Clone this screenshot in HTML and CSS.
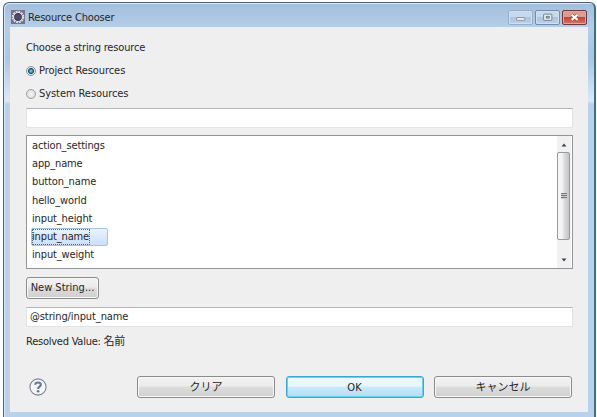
FILE: index.html
```html
<!DOCTYPE html>
<html lang="ja">
<head>
<meta charset="utf-8">
<title>Resource Chooser</title>
<link rel="stylesheet" href="styles.css">
</head>
<body>
<main class="window">
  <header class="titlebar">
    <svg class="app-icon" viewBox="0 0 14 14">
      <rect width="14" height="14" fill="#76718f"/>
      <circle cx="7" cy="7" r="5.2" fill="none" stroke="#e9e6ec" stroke-width="2" stroke-dasharray="1.7 1"/>
      <circle cx="7" cy="7" r="4.5" fill="#413c57" stroke="#e5e3eb"/>
      <path d="M3 6h8M3 8h8" stroke="#77718c" stroke-width=".6"/>
    </svg>
    <h1 class="title">Resource Chooser</h1>
    <div class="controls">
      <span class="control"><svg viewBox="0 0 24 13"><rect x="8" y="6.5" width="8.5" height="3" rx=".5" fill="#eee" stroke="#76818e" stroke-width=".8"/></svg></span>
      <span class="control maximize"><svg viewBox="0 0 24 13"><rect x="8" y="3" width="8.5" height="6.5" rx=".5" fill="#f1f1f1" stroke="#66717e" stroke-width=".9"/><rect x="10.7" y="5.2" width="3.2" height="2" fill="#8cacd0" stroke="#66717e" stroke-width=".8"/></svg></span>
      <span class="control close"><svg viewBox="0 0 24 13"><path d="M9 3.6l6.2 5.4M15.2 3.6l-6.2 5.4" stroke="#70474a" stroke-width="3.4"/><path d="M9 3.6l6.2 5.4M15.2 3.6l-6.2 5.4" stroke="#fff" stroke-width="2.2"/></svg></span>
    </div>
  </header>
  <section class="content">
    <p class="prompt">Choose a string resource</p>
    <div class="radio"><span class="dot checked"></span><span>Project Resources</span></div>
    <div class="radio"><span class="dot"></span><span>System Resources</span></div>
    <div class="field filter"></div>
    <div class="list">
      <ul class="items">
        <li>action_settings</li>
        <li>app_name</li>
        <li>button_name</li>
        <li>hello_world</li>
        <li>input_height</li>
        <li class="selected"><span>input_name</span></li>
        <li>input_weight</li>
      </ul>
      <div class="scrollbar">
        <svg class="arrow" viewBox="0 0 14 16"><path d="M4.5 10.5l2.5-3 2.5 3z" fill="#454545"/></svg>
        <div class="thumb"><i></i><i></i><i></i></div>
        <svg class="arrow down" viewBox="0 0 14 16"><path d="M4.5 6.5h5L7 9.5z" fill="#454545"/></svg>
      </div>
    </div>
    <div class="button new-string">New String...</div>
    <div class="field value">@string/input_name</div>
    <p class="resolved">Resolved Value: 名前</p>
    <footer class="footer">
      <svg class="help" viewBox="0 0 18 18"><circle cx="9" cy="9" r="8.1" fill="#f5f6f8" stroke="#7b8494" stroke-width="1.1"/><path d="M6.2 6.8C6.3 3.7 12 3.7 11.8 6.9C11.7 8.7 9.1 8.6 9.1 10.9" fill="none" stroke="#6b7791" stroke-width="2.2"/><circle cx="9.1" cy="13.2" r="1.3" fill="#6b7791"/></svg>
      <div class="button">クリア</div>
      <div class="button default">OK</div>
      <div class="button">キャンセル</div>
    </footer>
  </section>
</main>
</body>
</html>
```
FILE: styles.css
```css
* { box-sizing: border-box; }
body {
  margin: 0;
  width: 597px;
  height: 417px;
  overflow: hidden;
  background: #fdfdfd;
  color: #262626;
  font: 11px/18px "DejaVu Sans Condensed", "Noto Sans CJK JP", sans-serif;
}
h1, p, ul { margin: 0; padding: 0; font: inherit; list-style: none; }
.window {
  width: 593px;
  height: 425px;
  margin: 2px 0 0 3px;
  padding: 0 6px 0 6px;
  border: 1px solid #52616d;
  border-right: 2px solid #397381;
  border-radius: 6px 6px 0 0;
  background: linear-gradient(#a2bfdc 0, #b5cee9 25px, #a9c6e4 55px, #dbe9f7 98px, #b9d1ea 101px);
  box-shadow: inset 1px 1px #d8e7f5;
}
.titlebar {
  display: flex;
  align-items: flex-start;
  height: 24px;
}
.app-icon { width: 14px; height: 14px; margin: 7px 0 0 1px; }
.title { margin: 6px 0 0 3px; letter-spacing: -.17px; }
.controls { display: flex; gap: 2px; margin: 7px 1px 0 auto; }
.control {
  width: 25px;
  height: 15px;
  border: 1px solid #98aec6;
  border-radius: 2px;
  background: linear-gradient(#c7d9ed 50%, #abc5e0 50%, #bad1e9);
  box-shadow: inset 0 0 0 1px #d0e0f0;
}
.control svg { display: block; width: 23px; height: 13px; }
.maximize { border-color: #718ba8; }
.close {
  border-color: #6d3a42;
  background: linear-gradient(#df9b8d 45%, #c44630 50%, #d37663);
  box-shadow: inset 0 0 0 1px #e7a397;
}
.content {
  width: 578px;
  height: 385px;
  padding: 12px 15px 0 16px;
  background: #efefef;
}
.prompt { height: 21px; letter-spacing: -.17px; }
.radio { display: flex; align-items: center; gap: 3px; height: 22.5px; letter-spacing: -.07px; }
.dot {
  width: 10px;
  height: 10px;
  border: 1px solid #969ea5;
  border-radius: 50%;
  background: radial-gradient(#f5f5f5, #d6d6d6);
}
.checked { border-color: #8c989f; background: radial-gradient(circle, #47c3e2 0 1px, #164960 2.5px, #e1e7eb 3.5px); }
.field { height: 20px; border: 1px solid #e2e3e5; border-top-color: #b2b4b8; background: #fff; }
.filter { margin-top: 3px; }
.list {
  display: flex;
  justify-content: space-between;
  height: 134px;
  margin-top: 7px;
  border: 1px solid #92969b;
  background: #fff;
}
.items { width: 81px; padding: 1px 0 0 4px; line-height: 18.2px; letter-spacing: -.14px; }
.items li { height: 18.2px; padding-left: 1px; }
.items .selected {
  padding: 0;
  border: 1px solid #a4c3e5;
  border-radius: 2px;
  background: linear-gradient(#eaf3fe, #cbdff8);
  line-height: 16px;
}
.selected span { display: inline-block; height: 16px; padding-right: 1px; outline: 1px dotted #53657b; outline-offset: -1px; }
.scrollbar { width: 14px; margin-right: 1px; background: #f1f1f1; }
.arrow { display: block; width: 14px; height: 16px; }
.down { margin-top: 12px; }
.thumb {
  display: flex;
  flex-direction: column;
  align-items: center;
  justify-content: center;
  width: 13px;
  height: 88px;
  border: 1px solid #989b9e;
  border-radius: 2px;
  background: linear-gradient(90deg, #f4f4f4 35%, #dadada 60%, #c3c4c6);
}
.thumb i { width: 6px; height: 2px; background: #777; border-bottom: 1px solid #ccc; }
.button {
  height: 22px;
  border: 1px solid #8b8b8b;
  border-radius: 3px;
  background: linear-gradient(#f2f2f2 0, #ebebeb 46%, #dddddd 50%, #cfcfcf);
  box-shadow: inset 0 0 0 1px #f8f8f8;
  line-height: 21px;
  text-align: center;
}
.new-string { width: 73px; margin-top: 8px; line-height: 20px; }
.value { height: 20px; margin-top: 8px; padding-left: 3px; line-height: 18px; letter-spacing: -.1px; }
.resolved { height: 18px; margin-top: 6px; letter-spacing: -.24px; }
.footer {
  display: grid;
  grid-template-columns: 97.5px 138px 138px 138px;
  column-gap: 10.5px;
  margin: 25px 0 0 3px;
}
.help { width: 18px; height: 18px; margin-top: 2px; }
.default {
  border-color: #3ba6d0;
  background: linear-gradient(#eaf7fe 46%, #caeafb 50%, #b4dcf3);
  box-shadow: inset 0 0 0 1px #65d4f3;
}
```
